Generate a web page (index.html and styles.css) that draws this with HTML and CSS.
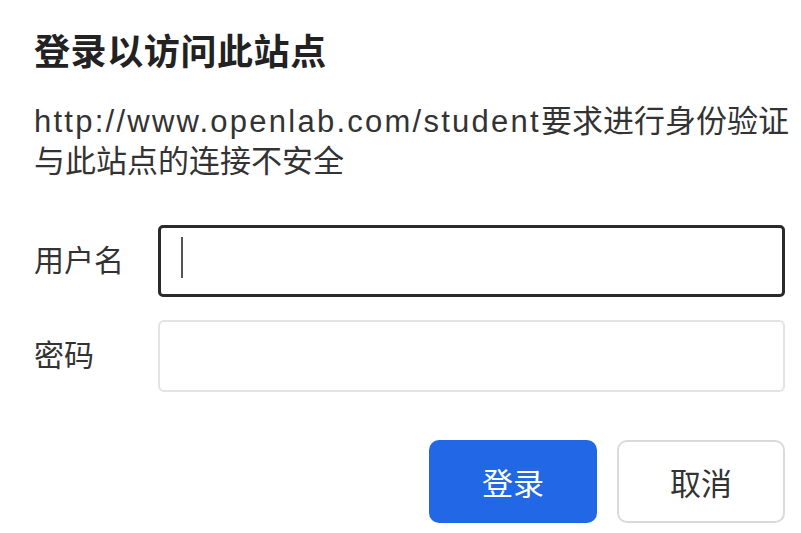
FILE: index.html
```html
<!DOCTYPE html>
<html lang="zh-CN">
<head>
<meta charset="utf-8">
<title>登录以访问此站点</title>
<link rel="stylesheet" href="styles.css">
</head>
<body>
<div class="dialog">
  <h1 class="title">登录以访问此站点</h1>
  <div class="desc">
    <p class="line"><span class="url">http://www.openlab.com/student</span>要求进行身份验证</p>
    <p class="line">与此站点的连接不安全</p>
  </div>
  <div class="form">
    <div class="row">
      <label class="label">用户名</label>
      <div class="field focused"><span class="caret"></span></div>
    </div>
    <div class="row">
      <label class="label">密码</label>
      <div class="field"></div>
    </div>
  </div>
  <div class="actions">
    <button class="btn primary">登录</button>
    <button class="btn secondary">取消</button>
  </div>
</div>
</body>
</html>
```

FILE: styles.css
```css
html, body {
  margin: 0;
  padding: 0;
  background: #ffffff;
}

body {
  font-family: "Liberation Sans", "Noto Sans CJK SC", sans-serif;
  color: #333333;
}

.dialog {
  padding: 31px 16px 0 34px;
}

.title {
  margin: 0;
  font-size: 36px;
  line-height: 44px;
  font-weight: bold;
  letter-spacing: 0.6px;
  color: #222222;
  white-space: nowrap;
}

.desc {
  margin-top: 27px;
  font-size: 31px;
  line-height: 40px;
  color: #333333;
}

.line {
  margin: 0;
  white-space: nowrap;
}

.url {
  letter-spacing: 2.25px;
}

.form {
  margin-top: 43px;
  display: flex;
  flex-direction: column;
  gap: 23px;
}

.row {
  display: flex;
  align-items: center;
}

.label {
  width: 124px;
  flex: none;
  font-size: 30px;
  line-height: 40px;
  color: #333333;
}

.field {
  flex: 1;
  height: 72px;
  box-sizing: border-box;
  border: 2px solid #e3e3e3;
  border-radius: 6px;
  background: #ffffff;
  display: flex;
  align-items: center;
  padding-left: 20px;
}

.field.focused {
  border: 3px solid #2a2a2a;
  border-radius: 5px;
}

.caret {
  width: 2px;
  height: 41px;
  margin-top: -8px;
  background: #555555;
}

.actions {
  margin-top: 48px;
  display: flex;
  justify-content: flex-end;
  gap: 20px;
}

.btn {
  width: 168px;
  height: 83px;
  box-sizing: border-box;
  border-radius: 10px;
  font-family: "Liberation Sans", "Noto Sans CJK SC", sans-serif;
  font-size: 31px;
  cursor: pointer;
}

.btn.primary {
  background: #2268e6;
  border: none;
  color: #ffffff;
}

.btn.secondary {
  background: #ffffff;
  border: 2px solid #dadada;
  color: #333333;
}
```
